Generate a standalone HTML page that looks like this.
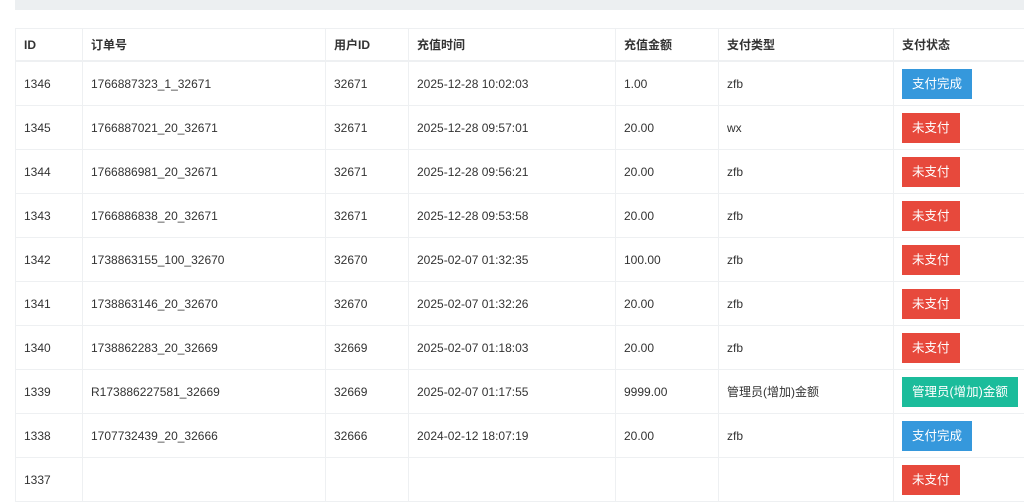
<!DOCTYPE html>
<html><head><meta charset="utf-8"><style>
body{margin:0;background:#fff;font-family:"Liberation Sans","Noto Sans CJK SC",sans-serif;font-size:12px;color:#333;width:1024px;height:473px;overflow:hidden;position:relative}
.bar{position:absolute;left:15px;top:0;width:1009px;height:10px;background:#eceff1}
table{position:absolute;left:15px;top:28px;border-collapse:collapse;table-layout:fixed;width:1030px}
td,th{border:1px solid #eef0f2;padding:0 8px;text-align:left;white-space:nowrap;overflow:hidden}
th{height:31px;font-weight:bold;border-bottom:2px solid #eef0f2}
td{height:43px}
.b{display:inline-block;color:#fff;padding:0 10px;height:30px;line-height:30px;font-size:12.5px}
.bl{background:#3598dc}.r{background:#e7493c}.g{background:#1bbc9b}
</style></head><body>
<div class="bar"></div>
<table>
<colgroup><col style="width:67px"><col style="width:243px"><col style="width:83px"><col style="width:207px"><col style="width:103px"><col style="width:175px"><col style="width:152px"></colgroup>
<tr><th>ID</th><th>订单号</th><th>用户ID</th><th>充值时间</th><th>充值金额</th><th>支付类型</th><th>支付状态</th></tr>
<tr><td>1346</td><td>1766887323_1_32671</td><td>32671</td><td>2025-12-28 10:02:03</td><td>1.00</td><td>zfb</td><td><span class="b bl">支付完成</span></td></tr>
<tr><td>1345</td><td>1766887021_20_32671</td><td>32671</td><td>2025-12-28 09:57:01</td><td>20.00</td><td>wx</td><td><span class="b r">未支付</span></td></tr>
<tr><td>1344</td><td>1766886981_20_32671</td><td>32671</td><td>2025-12-28 09:56:21</td><td>20.00</td><td>zfb</td><td><span class="b r">未支付</span></td></tr>
<tr><td>1343</td><td>1766886838_20_32671</td><td>32671</td><td>2025-12-28 09:53:58</td><td>20.00</td><td>zfb</td><td><span class="b r">未支付</span></td></tr>
<tr><td>1342</td><td>1738863155_100_32670</td><td>32670</td><td>2025-02-07 01:32:35</td><td>100.00</td><td>zfb</td><td><span class="b r">未支付</span></td></tr>
<tr><td>1341</td><td>1738863146_20_32670</td><td>32670</td><td>2025-02-07 01:32:26</td><td>20.00</td><td>zfb</td><td><span class="b r">未支付</span></td></tr>
<tr><td>1340</td><td>1738862283_20_32669</td><td>32669</td><td>2025-02-07 01:18:03</td><td>20.00</td><td>zfb</td><td><span class="b r">未支付</span></td></tr>
<tr><td>1339</td><td>R173886227581_32669</td><td>32669</td><td>2025-02-07 01:17:55</td><td>9999.00</td><td>管理员(增加)金额</td><td><span class="b g">管理员(增加)金额</span></td></tr>
<tr><td>1338</td><td>1707732439_20_32666</td><td>32666</td><td>2024-02-12 18:07:19</td><td>20.00</td><td>zfb</td><td><span class="b bl">支付完成</span></td></tr>
<tr><td>1337</td><td></td><td></td><td></td><td></td><td></td><td><span class="b r">未支付</span></td></tr>
</table>
</body></html>
